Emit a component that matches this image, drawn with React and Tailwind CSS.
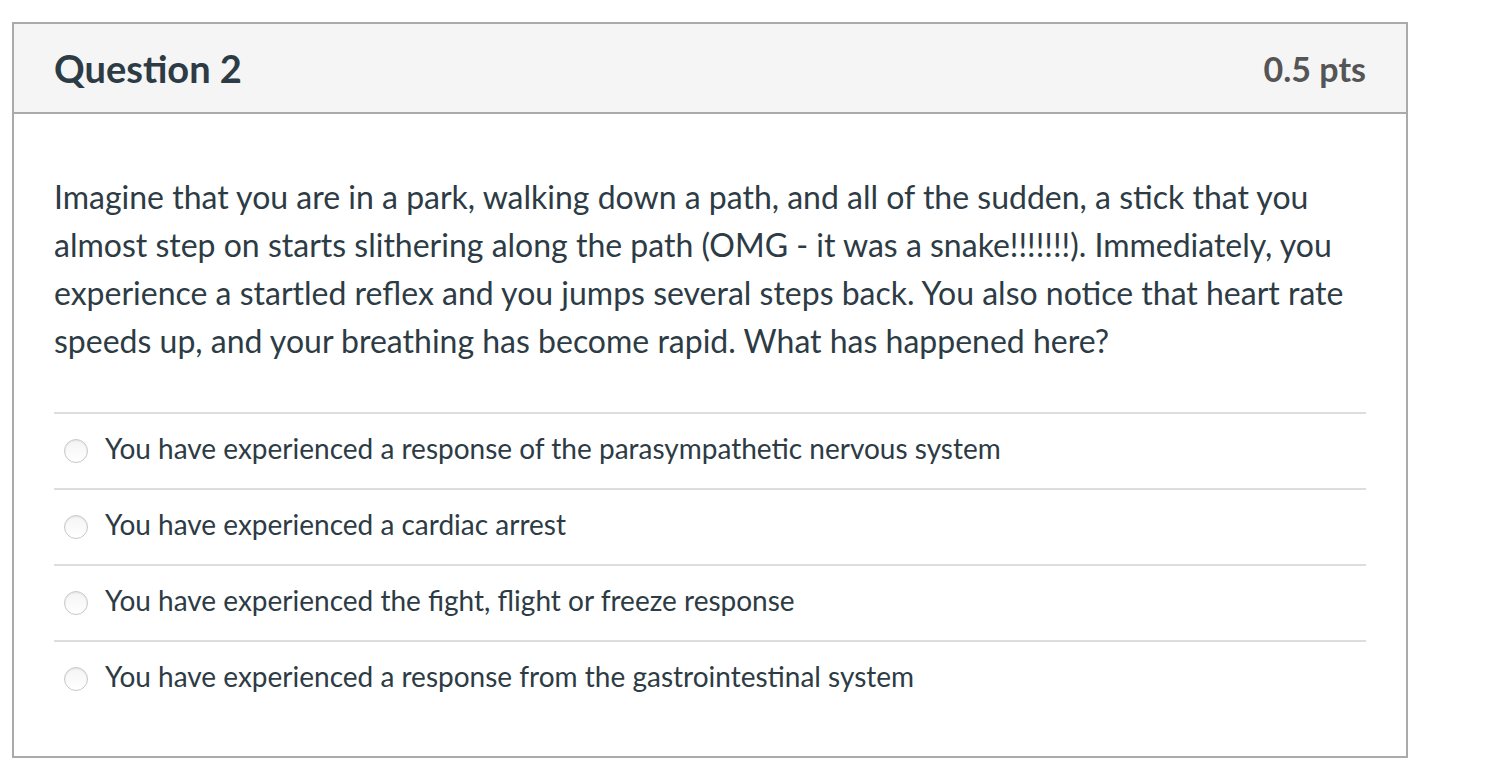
export default function App() {
  const options = [
    "You have experienced a response of the parasympathetic nervous system",
    "You have experienced a cardiac arrest",
    "You have experienced the fight, flight or freeze response",
    "You have experienced a response from the gastrointestinal system",
  ];
  return (
    <div className="w-[1490px] h-[768px] bg-white pt-[22px] pl-[12px]" style={{ fontFamily: "Lato, 'Liberation Sans', sans-serif" }}>
      <div className="w-[1396px] h-[736px] border-2 border-[#aaaaaa] flex flex-col">
        <div className="h-[90px] bg-[#f5f5f5] border-b-2 border-[#aaaaaa] flex items-center justify-between px-[40px]">
          <div className="text-[38px] font-bold text-[#2d3b45]">Question 2</div>
          <div className="text-[34px] font-bold text-[#555555]">0.5 pts</div>
        </div>
        <div className="px-[40px] pt-[59px]">
          <p className="text-[32px] leading-[48px] text-[#2d3b45]">
            Imagine that you are in a park, walking down a path, and all of the sudden, a stick that you almost step on starts slithering along the path (OMG - it was a snake!!!!!!!). Immediately, you experience a startled reflex and you jumps several steps back. You also notice that heart rate speeds up, and your breathing has become rapid. What has happened here?
          </p>
          <div className="mt-[47px]">
            {options.map((o, i) => (
              <div key={i} className="border-t-2 border-[#dddddd] h-[76px] flex items-center">
                <span className="ml-[10px] w-[24px] h-[24px] rounded-full border border-[#c8c8c8] bg-gradient-to-b from-[#f4f4f4] to-white shadow-[inset_0_1px_2px_rgba(0,0,0,0.08)] shrink-0"></span>
                <span className="ml-[17px] -mt-[6px] text-[28px] text-[#2d3b45]">{o}</span>
              </div>
            ))}
          </div>
        </div>
      </div>
    </div>
  );
}
